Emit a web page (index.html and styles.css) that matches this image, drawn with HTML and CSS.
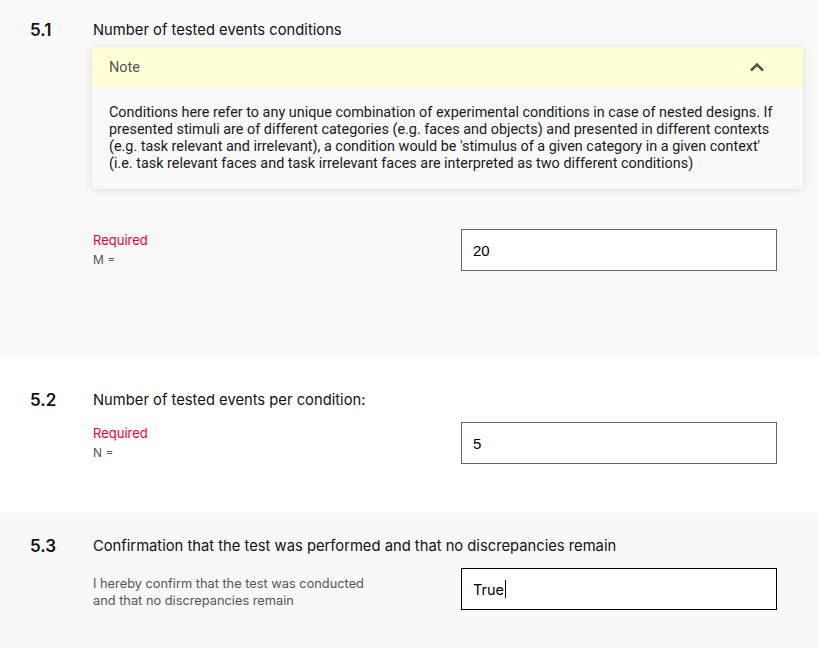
FILE: index.html
```html
<!DOCTYPE html>
<html>
<head>
<meta charset="utf-8">
<link rel="stylesheet" href="styles.css">
</head>
<body>
<section class="sec sec-gray sec-first">
  <div class="head"><span class="num">5.1</span><span class="title">Number of tested events conditions</span></div>
  <div class="note">
    <div class="note-head"><span>Note</span>
      <svg class="chev" width="16" height="10" viewBox="0 0 16 10"><path d="M2 8.5 L8 2.5 L14 8.5" fill="none" stroke="#555" stroke-width="2.6"/></svg>
    </div>
    <div class="note-body">Conditions here refer to any unique combination of experimental conditions in case of nested designs. If presented stimuli are of different categories (e.g. faces and objects) and presented in different contexts (e.g. task relevant and irrelevant), a condition would be 'stimulus of a given category in a given context' (i.e. task relevant faces and task irrelevant faces are interpreted as two different conditions)</div>
  </div>
  <div class="row row-first">
    <div class="label"><div class="req">Required</div><div class="sub">M =</div></div>
    <div class="input">20</div>
  </div>
</section>
<section class="sec sec-white">
  <div class="head"><span class="num">5.2</span><span class="title">Number of tested events per condition:</span></div>
  <div class="row">
    <div class="label"><div class="req">Required</div><div class="sub">N =</div></div>
    <div class="input">5</div>
  </div>
</section>
<section class="sec sec-gray sec-last">
  <div class="head"><span class="num">5.3</span><span class="title">Confirmation that the test was performed and that no discrepancies remain</span></div>
  <div class="row">
    <div class="label"><div class="desc">I hereby confirm that the test was conducted<br>and that no discrepancies remain</div></div>
    <div class="input input-focus"><span class="txt">True</span><span class="caret"></span></div>
  </div>
</section>
</body>
</html>
```
FILE: styles.css
```css
html, body { margin: 0; padding: 0; }
body { background: #fff; font-family: Inter, "Noto Sans", sans-serif; color: #111; width: 819px; height: 648px; overflow: hidden; }
.sec { padding: 33px 16px 49px 30px; }
.sec-gray { background: #f9f9f9; }
.sec-white { background: #fff; }
.sec-first { padding-top: 20px; padding-bottom: 86px; }
.sec-last { padding-top: 23px; padding-bottom: 40px; background: #f8f8f8; }
.head { display: flex; align-items: center; height: 20px; }
.num { width: 63px; font-size: 17px; font-weight: 600; color: #111; }
.title { font-size: 14.75px; color: #111; }
.note { margin: 7px 0 0 62px; background: #f9f9f9; box-shadow: 0 1px 8px rgba(0,0,0,0.12); }
.note-head { height: 40px; background: #ffffd7; display: flex; align-items: center; justify-content: space-between; padding: 0 38px 0 17px; font-family: Roboto, sans-serif; font-size: 14.5px; color: #555; }
.chev { display: block; }
.note-body { padding: 17px 17px 17px 17px; font-family: Roboto, sans-serif; font-size: 14.4px; line-height: 17px; color: #1a1a1a; }
.row { display: grid; grid-template-columns: 368px 316px; margin: 12px 0 0 63px; }
.row-first { margin-top: 40px; }
.label { padding-top: 3px; }
.req { font-size: 13px; line-height: 16px; color: #e8002f; }
.sub { font-size: 12px; line-height: 16px; margin-top: 4px; color: #555; }
.desc { font-size: 12.8px; line-height: 17px; color: #555; padding-top: 4px; }
.input { box-sizing: border-box; height: 42px; border: 1px solid #666; background: #fff; padding: 0 11px; display: flex; align-items: center; font-family: "Liberation Sans", Arial, sans-serif; font-size: 15px; color: #000; }
.input-focus { border-color: #000; font-family: Inter, sans-serif; font-size: 14.5px; }
.caret { display: inline-block; width: 1px; height: 18px; background: #000; margin-left: 1px; }
```
